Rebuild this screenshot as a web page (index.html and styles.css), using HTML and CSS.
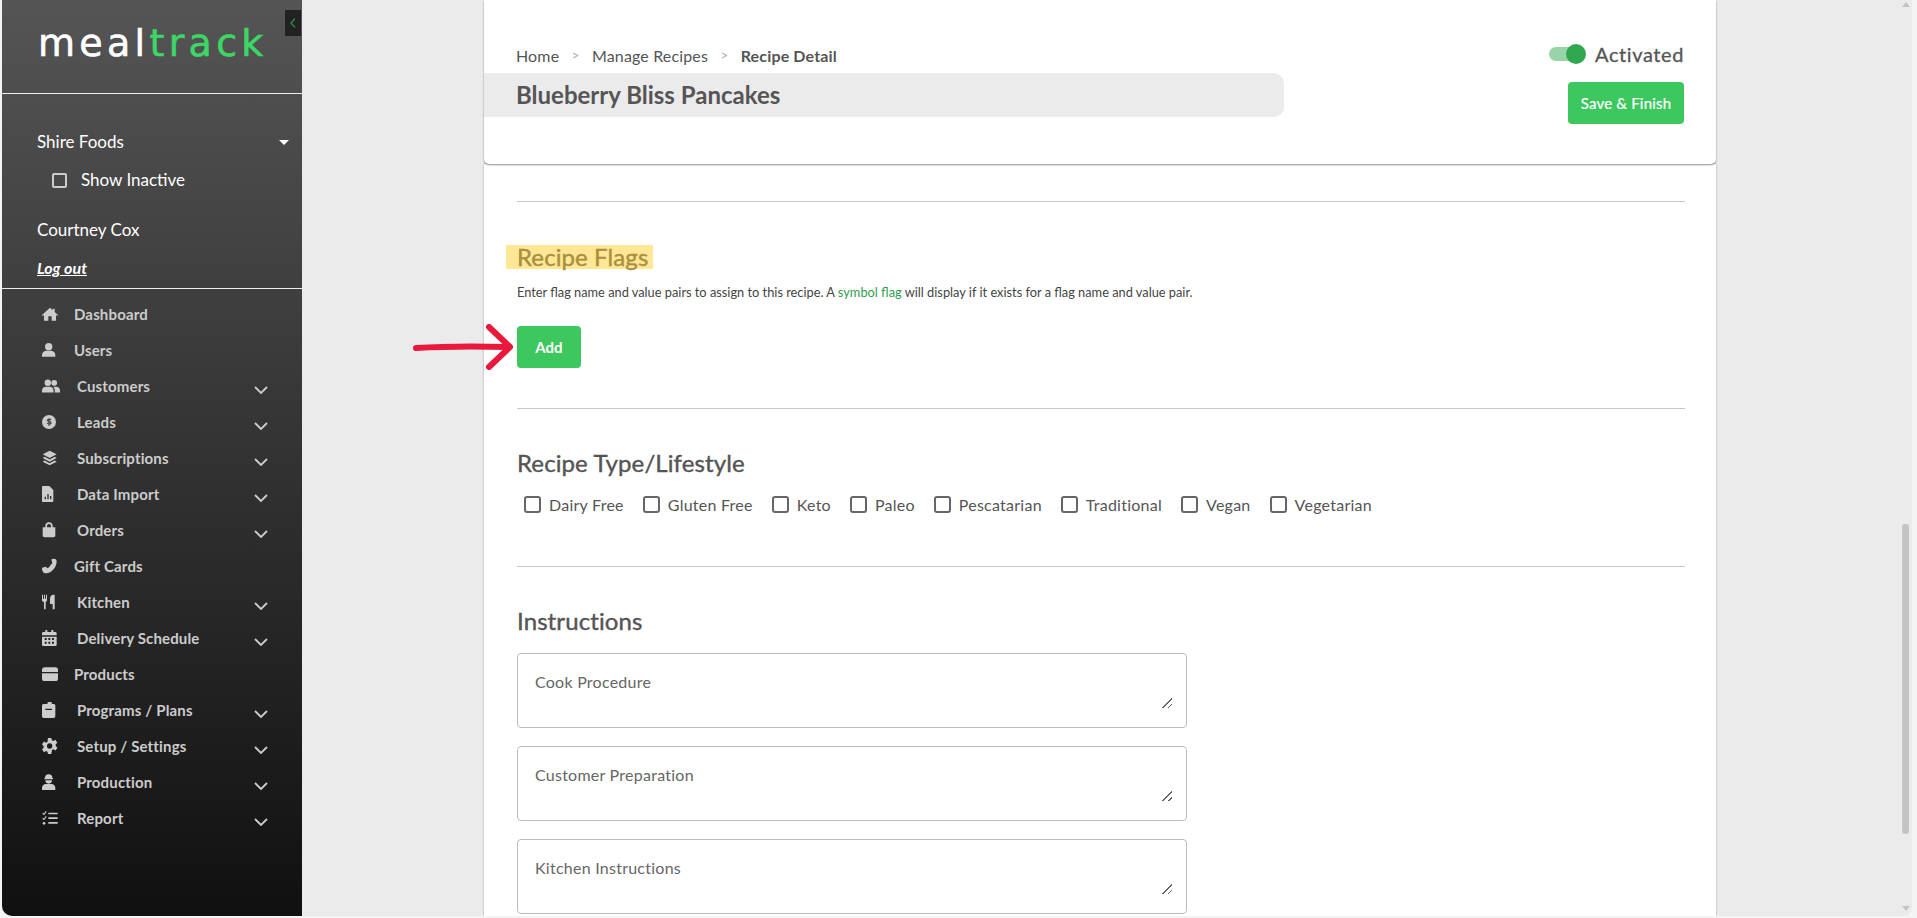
FILE: index.html
```html
<!DOCTYPE html>
<html lang="en">
<head>
<meta charset="utf-8">
<title>Recipe Detail</title>
<link rel="stylesheet" href="styles.css">
</head>
<body>
<div class="frame">
  <aside class="sidebar">
    <button class="collapse" aria-label="Collapse"><svg viewBox="0 0 10 16" class="collapse-icon"><path d="M7.5 2.5 2.5 8l5 5.500"/></svg></button>
    <div class="logo"><span class="logo-white">meal</span><span class="logo-green">track</span></div>
    <div class="account">
      <div class="org"><span>Shire Foods</span><i class="caret"></i></div>
      <label class="inactive"><span class="side-check"></span>Show Inactive</label>
      <div class="person">Courtney Cox</div>
      <a class="logout">Log out</a>
    </div>
    <nav class="nav">
      <a class="item"><svg class="ico" viewBox="0 0 24 24"><path d="M12 2.500 0 13.500l1.300 1.400L3 13.400V22h6.500v-6.500h5V22H21v-8.600l1.700 1.500 1.300-1.400-5-4.600V4h-3v2.200z"/></svg><span>Dashboard</span></a>
      <a class="item"><svg class="ico" viewBox="0 0 24 24"><circle cx="10" cy="7" r="5.500"/><path d="M0 22v-2.500C0 15.500 3 13 7 13h6c4 0 7 2.500 7 6.500V22z"/></svg><span>Users</span></a>
      <a class="item sub"><svg class="ico wide" viewBox="0 0 28 24"><circle cx="9" cy="7" r="5"/><circle cx="19" cy="7" r="4.500"/><path d="M0 22v-3c0-3.500 2.500-6 6-6h6c3.500 0 6 2.500 6 6v3zM20 22v-3c0-2.500-1-4.500-2.500-6H22c3.500 0 6 2.500 6 6v3z"/></svg><span>Customers</span><svg class="chev" viewBox="0 0 14 8"><path d="M1 1l6 6 6-6"/></svg></a>
      <a class="item sub"><svg class="ico" viewBox="0 0 24 24"><circle cx="10.500" cy="12" r="10.500"/><path class="cut" d="M13.500 9c-1-1.500-5.500-1.500-5.500.5s5.500 1 5.500 3.500-5 2-6 .5M10.500 6.500v11"/></svg><span>Leads</span><svg class="chev" viewBox="0 0 14 8"><path d="M1 1l6 6 6-6"/></svg></a>
      <a class="item sub"><svg class="ico" viewBox="0 0 24 24"><path d="M11.500 1 22 6.500 11.500 12 1 6.500zM4 10.300l7.500 4 7.500-4 3 1.700-10.500 5.500L1 12zM4 15.800l7.500 4 7.500-4 3 1.700L11.500 23 1 17.500z"/></svg><span>Subscriptions</span><svg class="chev" viewBox="0 0 14 8"><path d="M1 1l6 6 6-6"/></svg></a>
      <a class="item sub"><svg class="ico" viewBox="0 0 24 24"><path fill-rule="evenodd" d="M1 0h10l6 6v16c0 1-1 2-2 2H1c-1 0-1-1-1-2V2C0 1 0 0 1 0zM4 16v4h2v-4zM8 12v8h2v-8zM12 15v5h2v-5z"/></svg><span>Data Import</span><svg class="chev" viewBox="0 0 14 8"><path d="M1 1l6 6 6-6"/></svg></a>
      <a class="item sub"><svg class="ico" viewBox="0 0 24 24"><path fill-rule="evenodd" d="M5 8V6a5.500 5.500 0 0 1 11 0v2h4v12c0 2-1 3-3 3H4c-2 0-3-1-3-3V8zM7.500 8h6V6a3 3 0 0 0-6 0z"/></svg><span>Orders</span><svg class="chev" viewBox="0 0 14 8"><path d="M1 1l6 6 6-6"/></svg></a>
      <a class="item"><svg class="ico" viewBox="0 0 24 24"><path d="M18 1c-1 0-3 .500-4 1l1.500 6-2.500 2c-1 2.500-3 4.500-5 5.500l-2-2.500-6 1.500C0 15.500 0 18 .5 19c1 2.500 3 4 6 4C14 23 22 14 22 5c0-2-1.500-4-4-4z"/></svg><span>Gift Cards</span></a>
      <a class="item sub"><svg class="ico" viewBox="0 0 24 24"><path d="M0 1h1.500v6h1.500V1h1.500v6H6V1h1.500v8c0 1.500-1 2.500-2 3v11h-2.500V12C1 11.500 0 10.500 0 9zM17 1h2v22h-3v-8h-4V7c0-3 2-6 5-6z"/></svg><span>Kitchen</span><svg class="chev" viewBox="0 0 14 8"><path d="M1 1l6 6 6-6"/></svg></a>
      <a class="item sub"><svg class="ico" viewBox="0 0 24 24"><path fill-rule="evenodd" d="M5 0h3v3h6V0h3v3h3c1 0 2 1 2 2v3H0V5c0-1 1-2 2-2h3zM0 10h22v12c0 1-1 2-2 2H2c-1 0-2-1-2-2zM4 12v3h3v-3zM9.500 12v3h3v-3zM15 12v3h3v-3zM4 17.500v3h3v-3zM9.500 17.500v3h3v-3zM15 17.500v3h3v-3z"/></svg><span>Delivery Schedule</span><svg class="chev" viewBox="0 0 14 8"><path d="M1 1l6 6 6-6"/></svg></a>
      <a class="item"><svg class="ico" viewBox="0 0 24 24"><path d="M4 2h16.500c2 0 3.500 1.500 3.500 3.500V9H0V5.500C0 3.500 2 2 4 2zM0 11h24v8c0 2-1.500 3.500-3.500 3.500h-17C1.500 22.500 0 21 0 19z"/></svg><span>Products</span></a>
      <a class="item sub"><svg class="ico" viewBox="0 0 24 24"><path fill-rule="evenodd" d="M6 3h2a3.500 3.500 0 0 1 7 0h2c2 0 3 1 3 3v15c0 2-1 3-3 3H3c-2 0-3-1-3-3V6c0-2 1-3 3-3zM5 10v2h10v-2zM4.500 3h0"/></svg><span>Programs / Plans</span><svg class="chev" viewBox="0 0 14 8"><path d="M1 1l6 6 6-6"/></svg></a>
      <a class="item sub"><svg class="ico" viewBox="0 0 24 24"><path fill-rule="evenodd" d="M9 0h5l.8 3.500 2.200 1 3-1.800 3 4.300-2.500 2.500.2 2.500 2.500 2.500-3 4.300-3-1.800-2.200 1L14 24H9l-.8-3.500-2.200-1-3 1.800L0 17l2.500-2.500-.2-2.500L0 9.500 3 5.200l3 1.800 2.200-1zM11.500 8a4 4 0 1 0 0 8 4 4 0 0 0 0-8z"/></svg><span>Setup / Settings</span><svg class="chev" viewBox="0 0 14 8"><path d="M1 1l6 6 6-6"/></svg></a>
      <a class="item sub"><svg class="ico" viewBox="0 0 24 24"><path d="M4.500 6a5.500 5.500 0 0 1 11 0h1v2h-13V6zM5 9.500h10a5 5 0 0 1-10 0zM0 24v-3c0-4 3-6 6-6h8c3 0 6 2 6 6v3z"/></svg><span>Production</span><svg class="chev" viewBox="0 0 14 8"><path d="M1 1l6 6 6-6"/></svg></a>
      <a class="item sub"><svg class="ico" viewBox="0 0 24 24"><path d="M9.500 4h14v2.500h-14zM9.500 11h14v2.500h-14zM9.500 18h14v2.500h-14zM5.500 1.500 7 2.700 3 8 .5 5.500l1.200-1.200L3 5.500zM5.500 9 7 10.200 3 15.500.5 13l1.200-1.200L3 13z"/><circle cx="3" cy="20" r="2"/></svg><span>Report</span><svg class="chev" viewBox="0 0 14 8"><path d="M1 1l6 6 6-6"/></svg></a>
    </nav>
  </aside>

  <div class="workspace">
    <main class="sheet">
      <header class="sheet-head">
        <div class="head-left">
          <div class="crumbs"><span>Home</span><i>&gt;</i><span>Manage Recipes</span><i>&gt;</i><b>Recipe Detail</b></div>
          <h1 class="title">Blueberry Bliss Pancakes</h1>
        </div>
        <div class="head-right">
          <div class="status"><span class="toggle"><span class="knob"></span></span><span>Activated</span></div>
          <button class="btn btn-save">Save &amp; Finish</button>
        </div>
      </header>
      <div class="sheet-body">
        <hr class="rule">
        <h2 class="heading flags"><mark class="marked">Recipe Flags</mark></h2>
        <p class="desc">Enter flag name and value pairs to assign to this recipe. A <a class="link">symbol flag</a> will display if it exists for a flag name and value pair.</p>
        <div class="add-row">
          <svg class="arrow" viewBox="0 0 104 46"><path d="M3 24 C35 22 60 22 96 23"/><path d="M76 3 97 23 76 43"/></svg>
          <button class="btn btn-add">Add</button>
        </div>
        <hr class="rule rule-a">
        <h2 class="heading type">Recipe Type/Lifestyle</h2>
        <div class="checks">
          <label class="check"><span class="box"></span>Dairy Free</label>
          <label class="check"><span class="box"></span>Gluten Free</label>
          <label class="check"><span class="box"></span>Keto</label>
          <label class="check"><span class="box"></span>Paleo</label>
          <label class="check"><span class="box"></span>Pescatarian</label>
          <label class="check"><span class="box"></span>Traditional</label>
          <label class="check"><span class="box"></span>Vegan</label>
          <label class="check"><span class="box"></span>Vegetarian</label>
        </div>
        <hr class="rule rule-b">
        <h2 class="heading instr">Instructions</h2>
        <div class="fields">
          <div class="field"><label class="field-label">Cook Procedure</label><textarea class="area"></textarea></div>
          <div class="field"><label class="field-label">Customer Preparation</label><textarea class="area"></textarea></div>
          <div class="field"><label class="field-label">Kitchen Instructions</label><textarea class="area"></textarea></div>
        </div>
      </div>
    </main>
    <div class="scrollbar">
      <i class="arrow-up"></i>
      <div class="thumb"></div>
      <i class="arrow-down"></i>
    </div>
  </div>
</div>
</body>
</html>
```
FILE: styles.css
```css
* { box-sizing: border-box; }
html, body { margin: 0; height: 100%; overflow: hidden; }
body { background: #f4f4f4; font-family: Lato, "Liberation Sans", sans-serif; color: #555; }
.frame { height: 918px; padding: 0 5px 2px 2px; display: flex; }

/* sidebar */
.sidebar { position: relative; width: 300px; flex: none; background: linear-gradient(180deg, #555 0%, #101010 100%); border-bottom-left-radius: 10px; color: #fff; }
.collapse { position: absolute; top: 10px; right: 1px; width: 16px; height: 26px; border: 0; padding: 0; background: #222; display: flex; align-items: center; justify-content: center; }
.collapse-icon { width: 8px; height: 14px; fill: none; stroke: #2e9a4c; stroke-width: 1.500; }
.logo { height: 94px; border-bottom: 1px solid #eee; padding: 21px 0 0 36px; font-family: "DejaVu Sans", sans-serif; font-size: 38px; line-height: 44px; letter-spacing: 4.300px; font-weight: 400; -webkit-text-stroke: .6px currentColor; }
.logo-white { color: #fff; }
.logo-green { color: #3dd667; }
.account { height: 195px; border-bottom: 1px solid #eee; padding: 36px 0 0 35px; font-size: 17px; line-height: 24px; }
.org { display: flex; justify-content: space-between; align-items: center; padding-right: 13px; }
.caret { width: 0; height: 0; border-left: 5px solid transparent; border-right: 5px solid transparent; border-top: 5px solid #fff; }
.inactive { display: flex; align-items: center; margin-top: 14px; margin-left: 15px; }
.side-check { width: 15px; height: 15px; border: 2px solid #ccc; border-radius: 2px; margin-right: 14px; }
.person { margin-top: 26px; }
.logout { display: block; margin-top: 14px; font-style: italic; font-weight: 700; font-size: 16px; text-decoration: underline; }
.nav { padding: 7px 34px 0 40px; }
.item { height: 36px; display: flex; align-items: center; font-weight: 700; font-size: 15px; letter-spacing: .15px; color: #ccc; }
.ico { width: 16px; height: 16px; fill: #ccc; margin-right: 16px; flex: none; }
.ico.wide { width: 18px; margin-right: 14px; }
.cut { fill: none; stroke: #444; stroke-width: 2; }
.sub span { margin-left: 3px; }
.chev { width: 14px; height: 8px; margin-left: auto; margin-top: 8px; fill: none; stroke: #ccc; stroke-width: 1.800; }

/* workspace */
.workspace { flex: 1; min-width: 0; display: flex; background: #ebebeb; border-bottom-right-radius: 8px; overflow: hidden; }
.sheet { flex: 1; min-width: 0; display: flex; flex-direction: column; align-items: center; overflow: hidden; }
.sheet-head, .sheet-body { width: 1232px; flex: none; background: #fff; }
.sheet-head { height: 164px; display: flex; justify-content: space-between; align-items: flex-start; padding: 41px 32px 0 0; border-radius: 0 0 5px 5px; box-shadow: 0 1px 2px rgba(0, 0, 0, .45); position: relative; z-index: 1; }
.head-left { padding-top: 4px; }
.crumbs { height: 20px; padding-left: 32px; display: flex; align-items: center; font-size: 16px; letter-spacing: .15px; color: #555; }
.crumbs i { font-style: normal; color: #aaa; font-size: 13px; margin: 0 12.500px; }
.crumbs b { font-weight: 700; }
.title { margin: 8px 0 0; width: 800px; height: 44px; padding-left: 32px; background: #ebebeb; border-radius: 0 10px 10px 0; font-size: 24px; line-height: 44px; font-weight: 700; color: #555; }
.head-right { display: flex; flex-direction: column; align-items: flex-end; }
.status { display: flex; align-items: center; height: 24px; font-size: 20px; letter-spacing: .6px; -webkit-text-stroke: .3px #555; color: #555; margin-top: 1px; }
.toggle { position: relative; display: block; width: 34px; height: 14px; border-radius: 7px; background: #98d4a7; margin-right: 12px; }
.knob { position: absolute; right: -3px; top: -3px; width: 20px; height: 20px; border-radius: 50%; background: #2fa84f; }
.btn { border: 0; background: #3dc75f; color: #fff; font-family: inherit; border-radius: 4px; height: 42px; padding: 0; }
.btn-save { width: 116px; margin-top: 16px; font-size: 15px; letter-spacing: .2px; -webkit-text-stroke: .2px #fff; }
.sheet-body { flex: 1; padding: 37px 31px 0 33px; box-shadow: 0 0 2px rgba(0, 0, 0, .35); }
.rule { margin: 0; border: 0; height: 1px; background: #c8c8c8; }
.heading { margin: 0; font-size: 24px; line-height: 24px; font-weight: 400; letter-spacing: .1px; -webkit-text-stroke: .4px currentColor; color: #555; }
.flags { margin-top: 43px; }
.marked { background: #ffe795; color: #a98f3e; padding: 0 5px 0 11px; margin-left: -11px; display: inline-block; }
.desc { margin: 15px 0 0; font-size: 12.800px; line-height: 16px; color: #444; }
.link { color: #2f9e4f; }
.add-row { margin-top: 26px; position: relative; height: 42px; }
.arrow { position: absolute; left: -104px; top: -2px; width: 104px; height: 46px; fill: none; stroke: #e8193c; stroke-width: 6; stroke-linecap: round; stroke-linejoin: round; }
.btn-add { width: 64px; font-size: 15px; font-weight: 700; }
.rule-a { margin-top: 40px; }
.type { margin-top: 42px; }
.checks { margin-top: 17px; height: 24px; display: flex; padding-left: 7px; gap: 19px; }
.check { display: flex; align-items: center; font-size: 16px; letter-spacing: .25px; color: #555; }
.box { width: 17px; height: 17px; border: 2px solid #666; border-radius: 3px; margin-right: 8px; }
.rule-b { margin-top: 50px; }
.instr { margin-top: 42px; }
.fields { margin-top: 20px; display: flex; flex-direction: column; gap: 18px; }
.field { position: relative; width: 670px; height: 75px; border: 1px solid #bbb; border-radius: 4px; padding: 18px 14px 19px 17px; }
.field-label { position: absolute; left: 17px; top: 18px; font-size: 16px; letter-spacing: .25px; line-height: 20px; color: #666; }
.area { display: block; width: 100%; height: 36px; border: 0; padding: 0; outline: 0; background: transparent; resize: both; font: 15px Lato, sans-serif; }
.area::-webkit-resizer { background: linear-gradient(135deg, transparent 0 66%, #666 66% 72%, transparent 72% 84%, #666 84% 90%, transparent 90%); }

/* scrollbar */
.scrollbar { width: 14px; flex: none; display: flex; flex-direction: column; align-items: center; padding: 2px 0 5px 1px; }
.arrow-up { width: 0; height: 0; border-left: 4px solid transparent; border-right: 4px solid transparent; border-bottom: 5px solid #c4c4c4; }
.arrow-down { width: 0; height: 0; border-left: 4px solid transparent; border-right: 4px solid transparent; border-top: 5px solid #c4c4c4; }
.thumb { width: 7px; height: 310px; border-radius: 3px; background: #c4c4c4; margin-top: 517px; margin-bottom: auto; }
```
